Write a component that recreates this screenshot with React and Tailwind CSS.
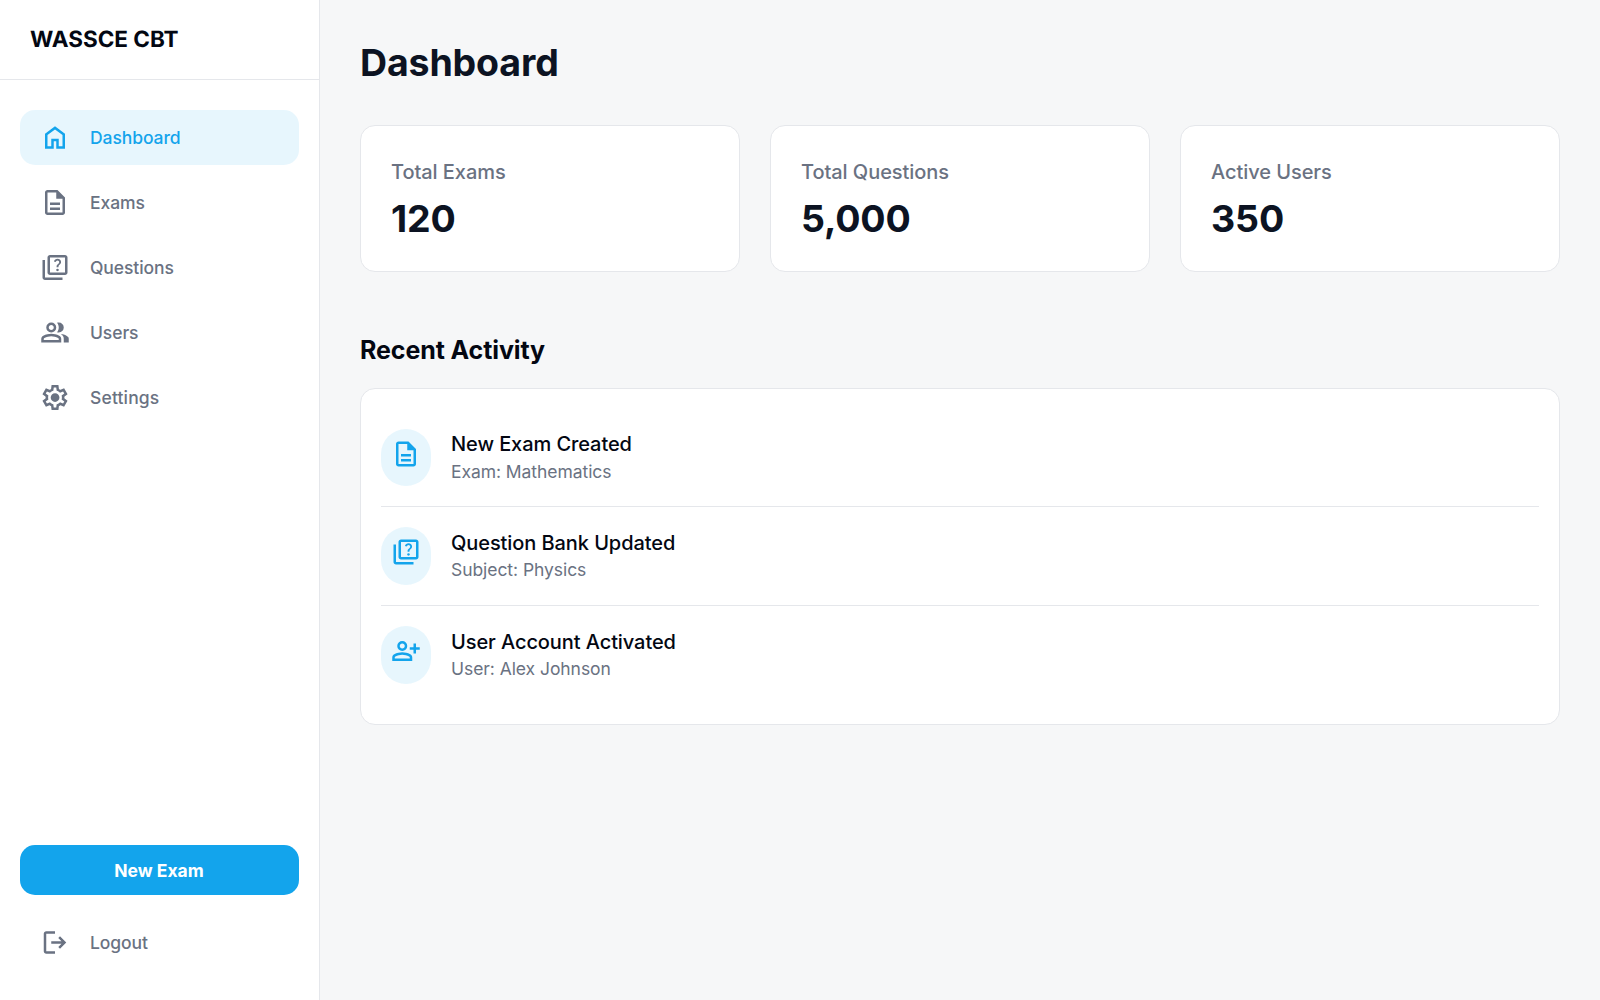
const ICONS = {
  home: "M240-200h120v-240h240v240h120v-360L480-740 240-560v360Zm-80 80v-480l320-240 320 240v480H520v-240h-80v240H160Zm320-350Z",
  description:
    "M320-240h320v-80H320v80Zm0-160h320v-80H320v80ZM240-80q-33 0-56.5-23.5T160-160v-640q0-33 23.5-56.5T240-880h320l240 240v480q0 33-23.5 56.5T720-80H240Zm280-520v-200H240v640h480v-440H520ZM240-800v200-200 640-640Z",
  quiz: "M560-360q17 0 29.5-12.5T602-402q0-17-12.5-29.5T560-444q-17 0-29.5 12.5T518-402q0 17 12.5 29.5T560-360Zm-30-128h60q0-29 6-42.5t28-35.5q30-30 40-48.5t10-43.5q0-45-31.5-73.5T560-760q-41 0-71.5 23T446-676l54 22q9-25 24.5-37.5T560-704q24 0 39 13.5t15 36.5q0 14-8 26.5T578-596q-33 29-40.5 45.5T530-488ZM320-240q-33 0-56.5-23.5T240-320v-480q0-33 23.5-56.5T320-880h480q33 0 56.5 23.5T880-800v480q0 33-23.5 56.5T800-240H320Zm0-80h480v-480H320v480ZM160-80q-33 0-56.5-23.5T80-160v-560h80v560h560v80H160Zm160-720v480-480Z",
  group:
    "M40-160v-112q0-34 17.5-62.5T104-378q62-31 126-46.5T360-440q66 0 130 15.5T616-378q29 15 46.5 43.5T680-272v112H40Zm720 0v-120q0-44-24.5-84.5T666-434q51 6 96 20.5t84 35.5q36 20 55 44.5t19 53.5v120H760ZM360-480q-66 0-113-47t-47-113q0-66 47-113t113-47q66 0 113 47t47 113q0 66-47 113t-113 47Zm400-160q0 66-47 113t-113 47q-11 0-28-2.5t-28-5.5q27-32 41.5-71t14.5-81q0-42-14.5-81T544-792q14-5 28-6.5t28-1.5q66 0 113 47t47 113ZM120-240h480v-32q0-11-5.5-20T580-306q-54-27-109-40.5T360-360q-56 0-111 13.5T140-306q-9 5-14.5 14t-5.5 20v32Zm240-320q33 0 56.5-23.5T440-640q0-33-23.5-56.5T360-720q-33 0-56.5 23.5T280-640q0 33 23.5 56.5T360-560Z",
  settings:
    "m370-80-16-128q-13-5-24.5-12T307-235l-119 50L78-375l103-78q-1-7-1-13.5v-27q0-6.5 1-13.5L78-585l110-190 119 50q11-8 23-15t24-12l16-128h220l16 128q13 5 24.5 12t22.5 15l119-50 110 190-103 78q1 7 1 13.5v27q0 6.5-2 13.5l103 78-110 190-118-50q-11 8-23 15t-24 12L590-80H370Zm70-80h79l14-106q31-8 57.5-23.5T639-327l99 41 39-68-86-65q5-14 7-29.5t2-31.5q0-16-2-31.5t-7-29.5l86-65-39-68-99 42q-22-23-48.5-38.5T533-694l-13-106h-79l-14 106q-31 8-57.5 23.5T321-633l-99-41-39 68 86 64q-5 15-7 30t-2 32q0 16 2 31t7 30l-86 65 39 68 99-42q22 23 48.5 38.5T427-266l13 106Zm42-180q58 0 99-41t41-99q0-58-41-99t-99-41q-59 0-99.5 41T342-480q0 58 40.5 99t99.5 41Z",
  personAdd:
    "M720-400v-120H600v-80h120v-120h80v120h120v80H800v120h-80Zm-360-80q-66 0-113-47t-47-113q0-66 47-113t113-47q66 0 113 47t47 113q0 66-47 113t-113 47ZM40-160v-112q0-34 17.5-62.5T104-378q62-31 126-46.5T360-440q66 0 130 15.5T616-378q29 15 46.5 43.5T680-272v112H40Zm80-80h480v-32q0-11-5.5-20T580-306q-54-27-109-40.5T360-360q-56 0-111 13.5T140-306q-9 5-14.5 14t-5.5 20v32Zm240-320q33 0 56.5-23.5T440-640q0-33-23.5-56.5T360-720q-33 0-56.5 23.5T280-640q0 33 23.5 56.5T360-560Z",
  logout:
    "M200-120q-33 0-56.5-23.5T120-200v-560q0-33 23.5-56.5T200-840h280v80H200v560h280v80H200Zm440-160-55-58 102-102H360v-80h327L585-622l55-58 200 200-200 200Z",
};

function Icon({ name, className = "" }) {
  return (
    <svg
      viewBox="0 -960 960 960"
      className={"size-[30px] shrink-0 fill-current " + className}
      aria-hidden="true"
    >
      <path d={ICONS[name]} />
    </svg>
  );
}

function NavItem({ icon, label, active }) {
  return (
    <a
      className={
        "flex h-[55px] items-center gap-5 rounded-[15px] px-5 text-[17.5px] leading-[25px] font-medium " +
        (active ? "bg-[#13a4ec]/10 text-[#13a4ec]" : "text-gray-500")
      }
    >
      <Icon name={icon} className="-translate-y-[0.5px]" />
      <span className={label === "Settings" ? "tracking-[0.15px]" : "tracking-[-0.08px]"}>{label}</span>
    </a>
  );
}

const stats = [
  ["Total Exams", "120"],
  ["Total Questions", "5,000"],
  ["Active Users", "350"],
];

const activity = [
  ["description", "New Exam Created", "Exam: Mathematics"],
  ["quiz", "Question Bank Updated", "Subject: Physics"],
  ["personAdd", "User Account Activated", "User: Alex Johnson"],
];

export default function App() {
  return (
    <div className="flex h-screen overflow-hidden bg-[#f6f7f8] font-['Inter',sans-serif] text-[#0c1322]">
      <aside className="flex w-80 shrink-0 flex-col border-r border-gray-200 bg-white">
        <div className="flex h-20 shrink-0 items-center border-b border-gray-200 px-[30px]">
          <span className="text-[22.5px] leading-[35px] font-bold text-gray-950 [text-rendering:geometricPrecision]">
            WASSCE CBT
          </span>
        </div>
        <nav className="flex flex-1 flex-col gap-2.5 px-5 pt-[30px]">
          <NavItem icon="home" label="Dashboard" active />
          <NavItem icon="description" label="Exams" />
          <NavItem icon="quiz" label="Questions" />
          <NavItem icon="group" label="Users" />
          <NavItem icon="settings" label="Settings" />
        </nav>
        <div className="flex flex-col gap-5 px-5 pb-[30px]">
          <button className="h-[50px] rounded-[15px] bg-[#13a4ec] pr-px text-[17.5px] leading-[25px] font-bold text-white">
            New Exam
          </button>
          <NavItem icon="logout" label="Logout" />
        </div>
      </aside>

      <main className="flex-1 p-10">
        <h1 className="text-[37.5px] leading-[45px] font-bold tracking-[-0.15px]">Dashboard</h1>
        <div className="mt-10 grid grid-cols-3 gap-[30px]">
          {stats.map(([label, value]) => (
            <div key={label} className="rounded-[15px] border border-gray-200 bg-white p-[30px]">
              <p className="pt-px text-xl leading-[30px] font-medium tracking-[-0.06px] text-gray-500">
                {label}
              </p>
              <p className="mt-[9px] text-[37.5px] leading-[45px] font-bold tracking-[-0.15px]">{value}</p>
            </div>
          ))}
        </div>

        <h2 className="mt-[61px] text-[25px] leading-[35px] font-bold tracking-[-0.1px] text-gray-950">
          Recent Activity
        </h2>
        <div className="mt-[19.6px] rounded-[15px] border border-gray-200 bg-white p-5">
          <ul className="divide-y divide-gray-200">
            {activity.map(([icon, title, sub]) => (
              <li key={title} className="flex gap-5 py-5">
                <div className="h-[57.8px] w-[50px] rounded-full bg-[#13a4ec]/10 p-2.5 text-[#13a4ec]">
                  <Icon name={icon} />
                </div>
                <div className="pt-[0.35px]">
                  <p className="-mb-[0.35px] text-xl leading-[30px] font-medium tracking-[-0.08px] text-gray-950">
                    {title}
                  </p>
                  <p className="text-[17.5px] leading-[25px] tracking-[-0.06px] text-gray-500">{sub}</p>
                </div>
              </li>
            ))}
          </ul>
        </div>
      </main>
    </div>
  );
}
